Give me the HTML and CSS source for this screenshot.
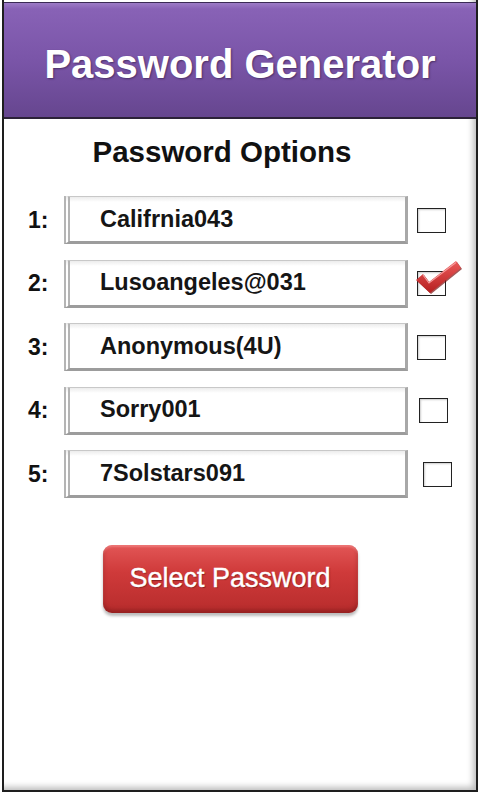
FILE: index.html
```html
<!DOCTYPE html>
<html lang="en">

<head>
    <meta name="viewport" content="width=device-width, initial-scale=1.0" />
    <title>Password Generator</title>
    <link rel="stylesheet" href="styles.css">
</head>

<body>
    <div class="screen">
        <header class="title-bar">
            <h1>Password Generator</h1>
        </header>

        <main class="options">
            <h2>Password Options</h2>

            <div class="row">
                <span class="num">1:</span>
                <div class="field">Califrnia043</div>
                <span class="box"></span>
            </div>

            <div class="row">
                <span class="num">2:</span>
                <div class="field">Lusoangeles@031</div>
                <span class="box checked">
                    <svg class="tick" viewBox="0 0 48 36" width="48" height="36">
                        <defs>
                            <linearGradient id="tickFill" x1="0" y1="0" x2="0" y2="1">
                                <stop offset="0" stop-color="#ec5a5a" />
                                <stop offset="1" stop-color="#b51f1f" />
                            </linearGradient>
                        </defs>
                        <!-- shadow -->
                        <path d="M2 21 L9 15 L15 23 L42 2 L47 9 L16 34 Z" fill="#7a1010" transform="translate(1,1)" opacity="0.7" />
                        <path d="M2 21 L9 15 L15 23 L42 2 L47 9 L16 34 Z" fill="url(#tickFill)" />
                        <path d="M9 16 L15 24 L42 3.5" fill="none" stroke="#f59a9a" stroke-width="1.2" />
                    </svg>
                </span>
            </div>

            <div class="row">
                <span class="num">3:</span>
                <div class="field">Anonymous(4U)</div>
                <span class="box"></span>
            </div>

            <div class="row">
                <span class="num">4:</span>
                <div class="field">Sorry001</div>
                <span class="box shift1"></span>
            </div>

            <div class="row">
                <span class="num">5:</span>
                <div class="field">7Solstars091</div>
                <span class="box shift2"></span>
            </div>

            <div class="actions">
                <button type="button" class="select-btn">Select Password</button>
            </div>
        </main>
    </div>
</body>

</html>
```

FILE: styles.css
```css
body {
    margin: 0;
    background-color: #fff;
    font-family: "Liberation Sans", Arial, sans-serif;
}

.screen {
    width: 472px;
    height: 790px;
    margin: 0 0 0 2px;
    border: 2px solid #1e1e1e;
    border-top: none;
    background-color: #fff;
    box-shadow: inset -6px -6px 6px -3px #bdbdbd;
    display: flex;
    flex-direction: column;
}

.title-bar {
    height: 114px;
    margin-top: 2px;
    border-top: 1px solid #3a2a55;
    border-bottom: 2px solid #2c2238;
    background: linear-gradient(#9c7bc6 0px, #8862b6 6px, #7a55a8 50%, #66468f 100%);
    display: flex;
    align-items: center;
    justify-content: center;
}

.title-bar h1 {
    margin: 0;
    color: #fff;
    font-size: 40px;
    font-weight: bold;
    text-shadow: 1px 1px 2px #4a3068;
    position: relative;
    top: 4px;
}

.options {
    padding: 16px 0 0 0;
}

.options h2 {
    margin: 0 0 27px 0;
    text-align: center;
    font-size: 29.5px;
    font-weight: bold;
    color: #111;
    padding-right: 36px;
}

.row {
    display: flex;
    align-items: center;
    height: 48px;
    margin-bottom: 15.5px;
}

.num {
    width: 60px;
    padding-left: 24px;
    box-sizing: border-box;
    font-size: 23px;
    font-weight: bold;
    color: #111;
}

.field {
    width: 344px;
    height: 48px;
    box-sizing: border-box;
    border: 1px solid #c8c8c8;
    border-left: 6px double #b4b4b4;
    border-right: 3px solid #a8a8a8;
    border-bottom: 3px solid #9c9c9c;
    background: linear-gradient(#ececec, #fff 5px);
    padding-left: 30px;
    display: flex;
    align-items: center;
    font-size: 23.5px;
    font-weight: bold;
    color: #151515;
}

.box {
    width: 27px;
    height: 23px;
    margin-left: 9px;
    border: 1.5px solid #222;
    background-color: #fff;
    box-shadow: inset 1px 1px 2px #ccc;
    position: relative;
}

.box.shift1 {
    margin-left: 11px;
}

.box.shift2 {
    margin-left: 15px;
}

.tick {
    position: absolute;
    left: -4px;
    top: -13px;
}

.actions {
    display: flex;
    justify-content: center;
    padding-top: 31px;
    padding-right: 20px;
}

.select-btn {
    width: 255px;
    height: 68px;
    border: none;
    border-radius: 9px;
    background: linear-gradient(#e25656, #cf3a3a 40%, #b72c2c 100%);
    box-shadow: 0 3px 3px #bbb, inset 0 -3px 4px rgba(110, 20, 20, 0.5), inset 0 2px 2px rgba(255, 160, 160, 0.5);
    color: #fff;
    font-family: "Liberation Sans", Arial, sans-serif;
    font-size: 27px;
    -webkit-text-stroke: 0.4px #fff;
    text-shadow: 1px 1px 1px #8a2020;
    cursor: pointer;
}
```
